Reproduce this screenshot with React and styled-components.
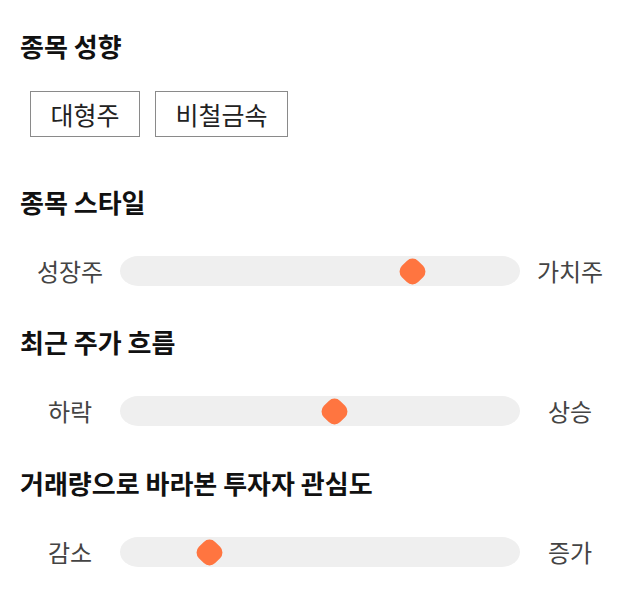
import styled, { createGlobalStyle } from "styled-components";

const GlobalStyle = createGlobalStyle`
  body {
    margin: 0;
    background: #ffffff;
    font-family: "Noto Sans CJK KR", "Noto Sans", sans-serif;
  }
`;

// 전체 페이지
const Page = styled.div`
  width: 640px;
  padding: 30px 20px 0;
  box-sizing: border-box;
  display: flex;
  flex-direction: column;
`;

const Section = styled.section`
  display: flex;
  flex-direction: column;
  gap: ${(props) => props.$gap}px;
  margin-bottom: ${(props) => props.$after}px;
`;

const Title = styled.h3`
  margin: 0;
  font-size: 26px;
  line-height: 32px;
  font-weight: 700;
  color: #111111;
`;

// 종목 성향 태그
const TagList = styled.div`
  display: flex;
  gap: 15px;
  padding-left: 10px;
`;

const Tag = styled.button`
  height: 46px;
  padding: 0 19.5px;
  border: 1px solid #8a8a8a;
  background: #ffffff;
  font-family: inherit;
  font-size: 25px;
  color: #222222;
  cursor: pointer;
`;

// 슬라이더 한 줄
const SliderRow = styled.div`
  display: grid;
  grid-template-columns: 100px 1fr 100px;
  align-items: center;
  height: 30px;
`;

const EndLabel = styled.span`
  text-align: center;
  font-size: 24px;
  line-height: 30px;
  color: #444444;
`;

const Track = styled.div`
  position: relative;
  height: 30px;
  background: #efefef;
  border-radius: 18px / 15px;
`;

const Thumb = styled.div`
  position: absolute;
  top: 3.5px;
  width: 23px;
  height: 23px;
  margin-left: 3.5px;
  background: #ff7540;
  border-radius: 8px;
  transform: rotate(45deg);
`;

function Slider({ left, right, value }) {
  return (
    <SliderRow>
      <EndLabel>{left}</EndLabel>
      <Track>
        {/* 썸 위치: 트랙 너비 - 썸 너비(30) 기준 */}
        <Thumb style={{ left: `calc((100% - 30px) * ${value / 100})` }} />
      </Track>
      <EndLabel>{right}</EndLabel>
    </SliderRow>
  );
}

export default function App() {
  return (
    <>
      <GlobalStyle />
      <Page>
        <Section $gap={29} $after={49}>
          <Title>종목 성향</Title>
          <TagList>
            <Tag>대형주</Tag>
            <Tag>비철금속</Tag>
          </TagList>
        </Section>
        <Section $gap={38} $after={40}>
          <Title>종목 스타일</Title>
          <Slider left="성장주" right="가치주" value={75} />
        </Section>
        <Section $gap={38} $after={41}>
          <Title>최근 주가 흐름</Title>
          <Slider left="하락" right="상승" value={54} />
        </Section>
        <Section $gap={38} $after={0}>
          <Title>거래량으로 바라본 투자자 관심도</Title>
          <Slider left="감소" right="증가" value={20} />
        </Section>
      </Page>
    </>
  );
}
